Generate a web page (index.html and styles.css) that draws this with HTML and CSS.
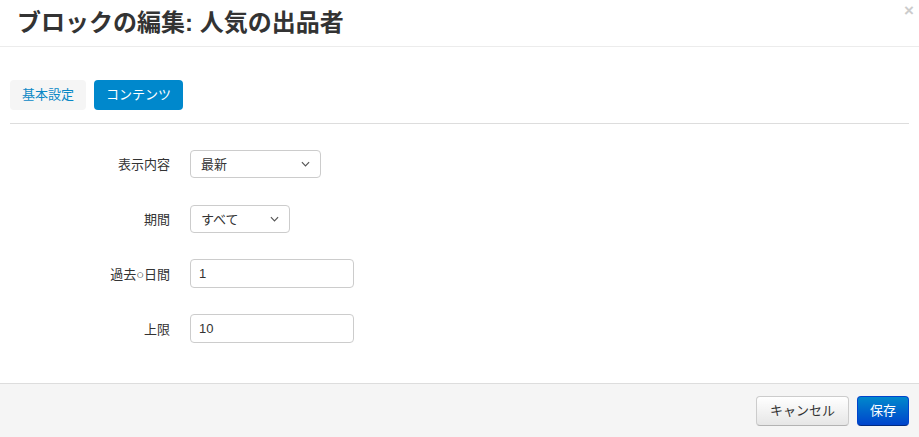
FILE: index.html
```html
<!DOCTYPE html>
<html lang="ja">
<head>
<meta charset="utf-8">
<link rel="stylesheet" href="styles.css">
</head>
<body>
<div class="modal">
  <div class="modal-header">
    <h3 class="title">ブロックの編集: 人気の出品者</h3>
    <span class="close">×</span>
  </div>
  <div class="modal-body">
    <div class="tabs">
      <span class="tab">基本設定</span>
      <span class="tab active">コンテンツ</span>
    </div>
    <div class="divider"></div>
    <div class="form">
      <div class="row">
        <label class="label">表示内容</label>
        <div class="select w131"><span>最新</span><svg class="caret" viewBox="0 0 10 6" width="9" height="6"><path d="M1 1l4 4 4-4" fill="none" stroke="#555" stroke-width="1.3"/></svg></div>
      </div>
      <div class="row">
        <label class="label">期間</label>
        <div class="select w100"><span>すべて</span><svg class="caret" viewBox="0 0 10 6" width="9" height="6"><path d="M1 1l4 4 4-4" fill="none" stroke="#555" stroke-width="1.3"/></svg></div>
      </div>
      <div class="row">
        <label class="label">過去○日間</label>
        <div class="input">1</div>
      </div>
      <div class="row">
        <label class="label">上限</label>
        <div class="input">10</div>
      </div>
    </div>
  </div>
  <div class="modal-footer">
    <span class="btn">キャンセル</span>
    <span class="btn btn-primary">保存</span>
  </div>
</div>
</body>
</html>
```
FILE: styles.css
```css
* { box-sizing: border-box; }
html, body { margin: 0; padding: 0; background: #fff; }
body {
  font-family: "Liberation Sans", "Noto Sans CJK JP", sans-serif;
  font-size: 13px;
  color: #333;
  width: 919px;
  height: 437px;
  overflow: hidden;
}
.modal { display: flex; flex-direction: column; height: 437px; }
.modal-header {
  position: relative;
  height: 47px;
  border-bottom: 1px solid #ececec;
  padding: 0 17px;
  display: flex;
  align-items: center;
}
.title {
  margin: 0;
  font-size: 24px;
  font-weight: bold;
  color: #333;
  position: relative;
  top: -3px;
}
.close {
  position: absolute;
  right: 5px;
  top: 1px;
  font-size: 17px;
  font-weight: bold;
  color: #ccc;
  line-height: 20px;
}
.modal-body { flex: 1; padding: 0 10px; }
.tabs { display: flex; gap: 8px; margin-top: 33px; }
.tab {
  height: 30px;
  line-height: 30px;
  padding: 0 12px;
  border-radius: 4px;
  background: #f5f5f5;
  color: #0a88c6;
  font-size: 13px;
}
.tab.active { background: #0088cc; color: #fff; padding: 0 12px; }
.divider { height: 1px; background: #ddd; margin-top: 13px; }
.form { display: flex; flex-direction: column; gap: 26px; margin-top: 25px; }
.row { display: flex; align-items: center; gap: 20px; height: 29px; }
.label { width: 160px; text-align: right; font-size: 13px; color: #333; }
.select {
  height: 28px;
  border: 1px solid #ccc;
  border-radius: 4px;
  display: flex;
  align-items: center;
  justify-content: space-between;
  padding: 0 10px 0 10px;
  font-size: 13px;
  color: #333;
  background: #fff;
}
.w131 { width: 131px; }
.w100 { width: 100px; }
.input {
  width: 164px;
  height: 29px;
  border: 1px solid #ccc;
  border-radius: 4px;
  display: flex;
  align-items: center;
  padding: 0 8px;
  font-size: 13px;
  color: #333;
}
.modal-footer {
  height: 54px;
  border-top: 1px solid #ddd;
  background: #f5f5f5;
  display: flex;
  justify-content: flex-end;
  align-items: center;
  gap: 8px;
  padding: 0 10px 0 0;
}
.btn {
  height: 30px;
  line-height: 28px;
  padding: 0 13px;
  border: 1px solid #ccc;
  border-bottom-color: #b3b3b3;
  border-radius: 4px;
  background: linear-gradient(#ffffff, #e6e6e6);
  color: #333;
  font-size: 13px;
}
.btn-primary {
  background: linear-gradient(#0088cc, #0044cc);
  border-color: #0044cc #0044cc #002a80;
  color: #fff;
  padding: 0 12px;
}
```
